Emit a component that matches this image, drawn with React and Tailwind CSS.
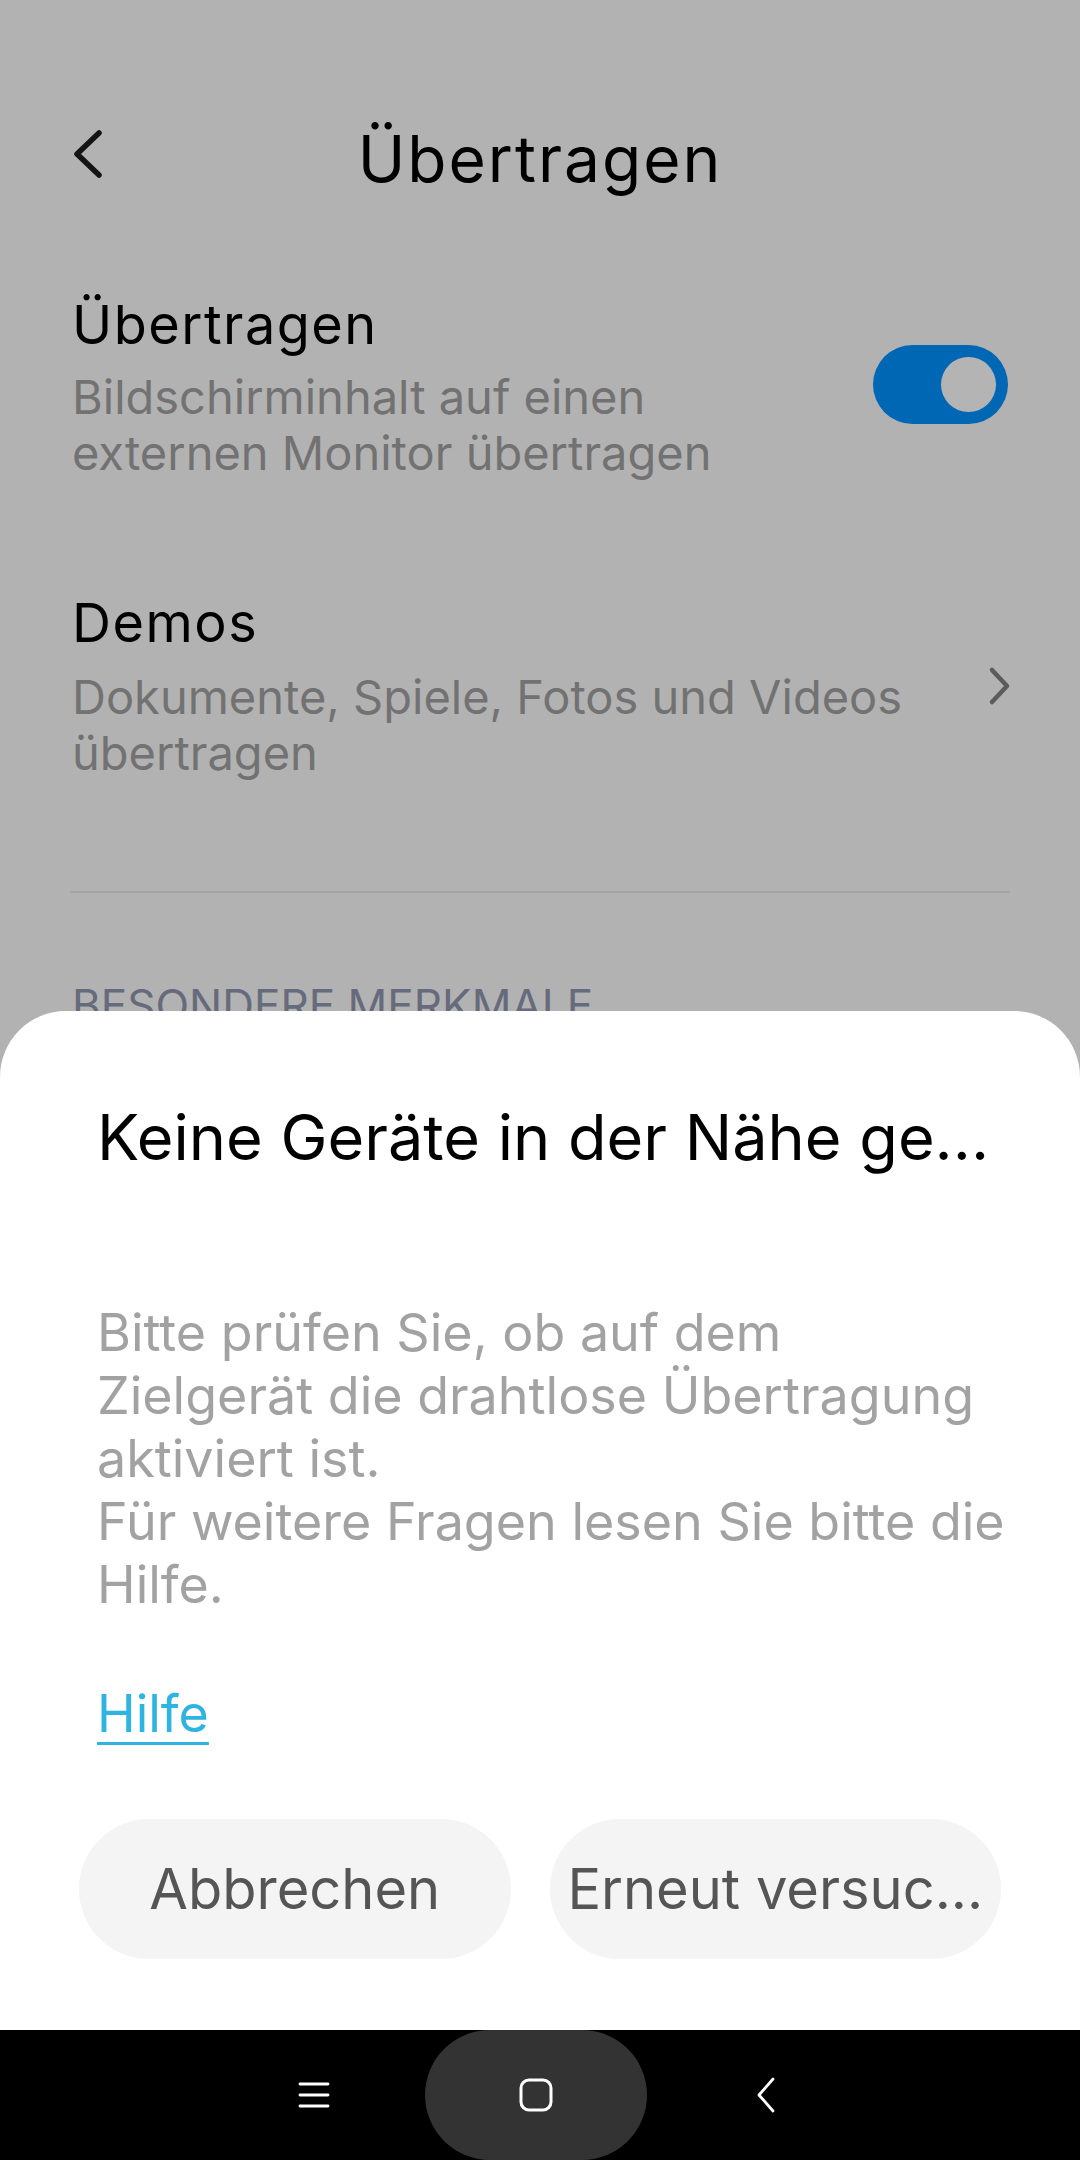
const font = { fontFamily: "Inter, 'Noto Sans', sans-serif" };

const App = () => {
  return (
    <div
      className="flex flex-col w-[1080px] h-[2160px] overflow-hidden bg-[#b2b2b2]"
      style={font}
    >
      <div className="relative flex-1">
        {/* Header */}
        <div className="grid grid-cols-[1fr_auto_1fr] items-start mt-[121px] h-[76px] px-[60px]">
          <div className="flex mt-[3px]">
            <svg width="48" height="60" viewBox="0 0 48 60" fill="none">
              <path
                d="M39 9 L17 30 L39 51"
                stroke="#141414"
                strokeWidth="5.5"
                strokeLinecap="round"
                strokeLinejoin="round"
              />
            </svg>
          </div>
          <h1 className="text-[64px] leading-[76px] tracking-[2px] text-black">Übertragen</h1>
          <div />
        </div>

        {/* Übertragen toggle */}
        <div className="flex items-start justify-between px-[72px] mt-[96px]">
          <div>
            <div className="text-[54px] leading-[64px] tracking-[1.5px] text-black">Übertragen</div>
            <div className="mt-[12px] text-[47px] leading-[56px] text-[#727272]">
              Bildschirminhalt auf einen
              <br />
              externen Monitor übertragen
            </div>
          </div>
          <div className="flex items-center justify-end w-[135px] h-[79px] mt-[52px] rounded-full bg-[#0067b4] pr-[12px]">
            <div className="w-[55px] h-[55px] rounded-full bg-[#b4b4b4]" />
          </div>
        </div>

        {/* Demos */}
        <div className="flex items-center justify-between px-[72px] mt-[110px]">
          <div>
            <div className="text-[54px] leading-[64px] tracking-[1.5px] text-black">Demos</div>
            <div className="mt-[14px] text-[47px] leading-[56px] text-[#727272]">
              Dokumente, Spiele, Fotos und Videos
              <br />
              übertragen
            </div>
          </div>
          <svg width="30" height="44" viewBox="0 0 30 44" fill="none" className="-mr-[4px]">
            <path
              d="M10 6 L25 22 L10 38"
              stroke="#5b5b5b"
              strokeWidth="4.5"
              strokeLinecap="round"
              strokeLinejoin="round"
            />
          </svg>
        </div>

        {/* Divider */}
        <div className="mx-[70px] mt-[110px] h-[2px] bg-[#a4a4a4]" />

        <div className="px-[72px] mt-[86px] text-[44px] leading-[52px] text-[#656b7c]">
          BESONDERE MERKMALE
        </div>

        {/* Bottom sheet */}
        <div className="absolute left-0 right-0 bottom-0 h-[1019px] bg-white rounded-t-[66px] pt-[88px]">
          <div className="px-[97px] text-[63px] leading-[76px] text-black whitespace-nowrap">
            Keine Geräte in der Nähe ge...
          </div>
          <div className="px-[97px] mt-[126px] text-[52px] leading-[63px] text-[#a2a2a2] whitespace-nowrap">
            Bitte prüfen Sie, ob auf dem
            <br />
            Zielgerät die drahtlose Übertragung
            <br />
            aktiviert ist.
            <br />
            Für weitere Fragen lesen Sie bitte die
            <br />
            Hilfe.
          </div>
          <div className="px-[97px] mt-[66px] text-[52px] leading-[63px]">
            <span className="text-[#2fb4e2] underline decoration-[3px] underline-offset-[10px]">
              Hilfe
            </span>
          </div>
          <div className="flex gap-[39px] px-[79px] mt-[74px]">
            <button className="flex-1 h-[140px] rounded-full bg-[#f4f4f4] text-[56px] text-[#555555]">
              Abbrechen
            </button>
            <button className="flex-1 h-[140px] rounded-full bg-[#f4f4f4] text-[56px] text-[#555555] px-[10px] whitespace-nowrap overflow-hidden">
              Erneut versuc...
            </button>
          </div>
        </div>
      </div>

      {/* Navigation bar */}
      <div className="flex items-center justify-center h-[130px] bg-black">
        <div className="flex items-center justify-center w-[222px]">
          <svg width="32" height="28" viewBox="0 0 32 28" fill="none">
            <path d="M2 3 H30 M2 14 H30 M2 25 H30" stroke="white" strokeWidth="2.8" strokeLinecap="round" />
          </svg>
        </div>
        <div className="flex items-center justify-center w-[222px] h-[130px] rounded-full bg-[#333333]">
          <svg width="36" height="36" viewBox="0 0 36 36" fill="none">
            <rect x="3" y="3" width="30" height="30" rx="8" stroke="white" strokeWidth="3" />
          </svg>
        </div>
        <div className="flex items-center justify-center w-[230px]">
          <svg width="24" height="36" viewBox="0 0 24 36" fill="none" className="-mr-[8px]">
            <path d="M19 2 L5 18 L19 34" stroke="white" strokeWidth="2.8" strokeLinecap="round" strokeLinejoin="round" />
          </svg>
        </div>
      </div>
    </div>
  );
};

export default App;
